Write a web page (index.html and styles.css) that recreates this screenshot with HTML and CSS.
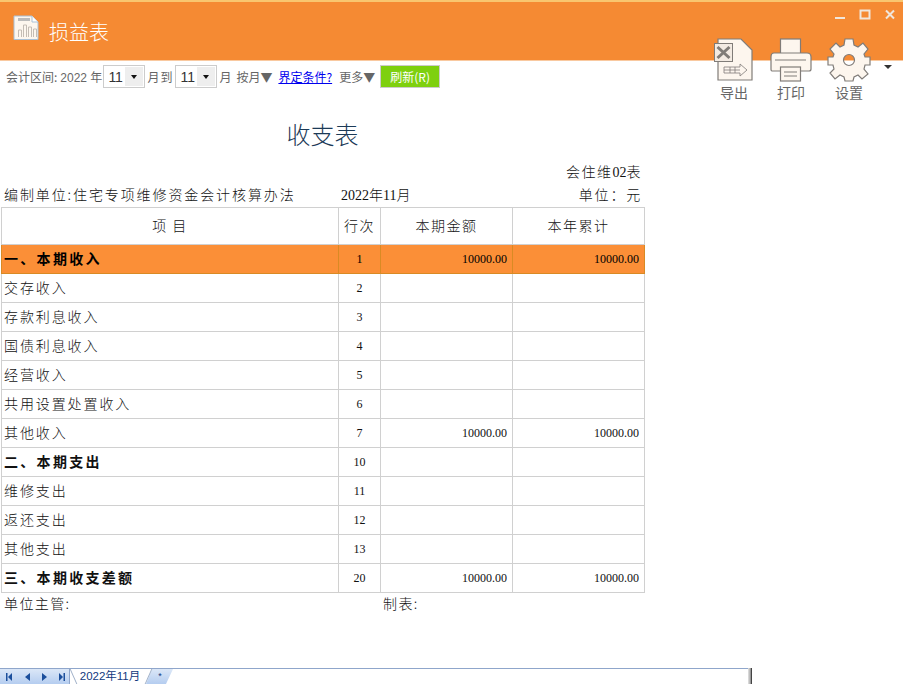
FILE: index.html
```html
<!DOCTYPE html>
<html lang="zh-CN">

<head>
    <meta charset="UTF-8">
    <title>损益表</title>
    <link rel="stylesheet" href="styles.css">
</head>

<body>
    <div id="cabecalho">
        <svg class="logo" width="26" height="26" viewBox="0 0 26 26">
            <path d="M1 1H19L25 7V24.500H1Z" fill="#fdf6ee" stroke="#a9c0d6" />
            <path d="M19 1V7H25" fill="#fff" stroke="#a9c0d6" />
            <rect x="5" y="3" width="12" height="3" fill="#bbb" />
            <path d="M5.500 22V15H8.500V22M10.500 22V10H13.500V22M15.500 22V12H18.500V22M20.500 22V14H23.500V22" fill="none" stroke="#c4bcb4" />
        </svg>
        <span class="titulo-janela">损益表</span>

        <div class="janela">
            <svg width="12" height="12" viewBox="0 0 12 12"><rect x="1" y="8" width="10" height="2" fill="#f0e6dc" /></svg>
            <svg width="12" height="12" viewBox="0 0 12 12"><rect x="1.500" y="1.500" width="9" height="8" fill="none" stroke="#f0e6dc" stroke-width="2" /></svg>
            <svg width="12" height="12" viewBox="0 0 12 12"><path d="M2 1.500L10 9.500M10 1.500L2 9.500" stroke="#f0e6dc" stroke-width="2" /></svg>
        </div>

        <div class="ferramentas">
            <div class="ferramenta">
                <svg width="40" height="44" viewBox="0 0 40 44">
                    <path d="M4 1H27L38 12V42H4Z" fill="#fdf6ee" stroke="#807c78" stroke-width="1.200" />
                    <rect x="0.500" y="5.500" width="18" height="18" fill="#f3ebe3" stroke="#807c78" />
                    <path d="M3.500 9L15.500 20M15.500 9L3.500 20" stroke="#807c78" stroke-width="3" />
                    <path d="M10 29H26V26L33 32L26 38V35H10ZM10 32H26M16 29V35M21 29V35" fill="none" stroke="#807c78" stroke-width="0.800" />
                </svg>
                <span>导出</span>
            </div>
            <div class="ferramenta">
                <svg width="42" height="44" viewBox="0 0 42 44">
                    <rect x="10.500" y="1" width="20" height="15" fill="#fdf6ee" stroke="#807c78" stroke-width="1.200" />
                    <path d="M4 15H37Q41 15 41 19V31Q41 33 39 33H2Q1 33 1 31V19Q1 15 4 15Z" fill="#fdf6ee" stroke="#807c78" stroke-width="1.200" />
                    <path d="M5 22H36" stroke="#807c78" />
                    <rect x="10.500" y="29" width="20" height="14" fill="#fdf6ee" stroke="#807c78" stroke-width="1.200" />
                    <path d="M14 34H27M14 38H27" stroke="#807c78" />
                </svg>
                <span>打印</span>
            </div>
            <div class="ferramenta engrenagem">
                <svg width="44" height="44" viewBox="0 0 44 44">
                    <path fill-rule="evenodd" d="M18 1H26L27 7L31 9L36 5L41 11L37 16L38 19L43 19V27L38 27L37 31L41 36L35 41L31 37L27 39L26 43H18L17 39L13 37L8 41L3 35L7 31L6 27L1 27V19L6 19L7 16L3 11L9 5L13 9L17 7ZM16.500 22a5.500 5.500 0 1 0 11 0a5.500 5.500 0 1 0 -11 0Z" fill="#fdf6ee" stroke="#807c78" stroke-width="1.200" />
                </svg>
                <span>设置</span>
            </div>
            <span class="seta-menu"></span>
        </div>
    </div>

    <div id="filtros">
        <span class="rotulo">会计区间:</span>
        <span class="rotulo ano">2022 年</span>
        <span class="seletor">11<i class="botao-seta"></i></span>
        <span class="rotulo grande">月到</span>
        <span class="seletor">11<i class="botao-seta"></i></span>
        <span class="rotulo grande">月</span>
        <span class="rotulo opcao">按月▼</span>
        <a href="#" class="link">界定条件?</a>
        <span class="rotulo opcao">更多▼</span>
        <button class="atualizar">刷新(R)</button>
    </div>

    <div id="relatorio">
        <h1>收支表</h1>
        <div class="codigo">会住维<b>02</b>表</div>
        <div class="info">
            <span class="unidade">编制单位:住宅专项维修资金会计核算办法</span>
            <span class="periodo"><b>2022</b>年<b>11</b>月</span>
            <span class="moeda">单位：元</span>
        </div>
        <table>
            <thead>
                <tr>
                    <th class="col-item">项 目</th>
                    <th class="col-linha">行次</th>
                    <th class="col-valor">本期金额</th>
                    <th class="col-valor">本年累计</th>
                </tr>
            </thead>
            <tbody>
                <tr class="destaque"><td class="forte">一、本期收入</td><td class="linha">1</td><td class="valor">10000.00</td><td class="valor">10000.00</td></tr>
                <tr><td>交存收入</td><td class="linha">2</td><td></td><td></td></tr>
                <tr><td>存款利息收入</td><td class="linha">3</td><td></td><td></td></tr>
                <tr><td>国债利息收入</td><td class="linha">4</td><td></td><td></td></tr>
                <tr><td>经营收入</td><td class="linha">5</td><td></td><td></td></tr>
                <tr><td>共用设置处置收入</td><td class="linha">6</td><td></td><td></td></tr>
                <tr><td>其他收入</td><td class="linha">7</td><td class="valor">10000.00</td><td class="valor">10000.00</td></tr>
                <tr><td class="forte">二、本期支出</td><td class="linha">10</td><td></td><td></td></tr>
                <tr><td>维修支出</td><td class="linha">11</td><td></td><td></td></tr>
                <tr><td>返还支出</td><td class="linha">12</td><td></td><td></td></tr>
                <tr><td>其他支出</td><td class="linha">13</td><td></td><td></td></tr>
                <tr><td class="forte">三、本期收支差额</td><td class="linha">20</td><td class="valor">10000.00</td><td class="valor">10000.00</td></tr>
            </tbody>
        </table>
        <div class="assinaturas">
            <span class="chefe">单位主管:</span>
            <span>制表:</span>
        </div>
    </div>

    <div id="abas">
        <div class="navegacao">
            <svg width="68" height="14" viewBox="0 0 68 14" fill="#1c4f9c">
                <path d="M6 3H7.500V11H6ZM12 3V11L8 7ZM30 3V11L25 7ZM42 3V11L47 7ZM59 3V11L63 7ZM63.500 3H65V11H63.500Z" />
            </svg>
        </div>
        <div class="aba ativa">2022年11月</div>
        <div class="aba nova">*</div>
        <div class="barra-fim"></div>
    </div>
</body>

</html>
```

FILE: styles.css
```css
html,
body {
    margin: 0;
    height: 684px;
    overflow: hidden;
}

body {
    font-family: "Liberation Serif", "Noto Sans CJK SC", serif;
    background-color: #fff;
    color: #111;
    display: flex;
    flex-direction: column;
    position: relative;
}

#cabecalho {
    height: 58px;
    flex: none;
    background-color: #f58a33;
    border-top: 2px solid #f9c66f;
    border-bottom: 1px solid #f9c9a0;
    display: flex;
    align-items: center;
    padding-left: 13px;
    gap: 10px;
    color: #fff;
}

.logo {
    margin-top: -6px;
}

.titulo-janela {
    font-family: "Noto Sans CJK SC", sans-serif;
    font-size: 20px;
    font-weight: 300;
}

.janela {
    position: absolute;
    top: 9px;
    right: 7px;
    display: flex;
    gap: 13px;
}

.ferramentas {
    position: absolute;
    top: 38px;
    left: 713px;
    display: flex;
    gap: 15px;
}

.ferramenta {
    display: flex;
    flex-direction: column;
    align-items: center;
    width: 42px;
    color: #666;
    font-family: "Noto Sans CJK SC", sans-serif;
    font-size: 14px;
    line-height: 20px;
}

.ferramenta svg {
    display: block;
    height: 44px;
    flex: none;
}

.engrenagem {
    margin-left: 1px;
}

.seta-menu {
    position: absolute;
    top: 27px;
    left: 171px;
    border-left: 4px solid transparent;
    border-right: 4px solid transparent;
    border-top: 4px solid #333;
}

#filtros {
    height: 31px;
    flex: none;
    display: flex;
    align-items: center;
    padding-left: 6px;
    font-family: "Noto Sans CJK SC", sans-serif;
    font-size: 12px;
    color: #666;
}

.rotulo {
    white-space: nowrap;
}

.ano {
    font-family: "Liberation Sans", "Noto Sans CJK SC", sans-serif;
    font-size: 12px;
    margin-left: 3px;
    margin-right: 1px;
}

.grande {
    margin: 0 2px;
    letter-spacing: 1px;
}

.opcao {
    margin-left: 2px;
}

.seletor {
    width: 36px;
    height: 21px;
    border: 1px solid #ccc;
    display: flex;
    align-items: center;
    justify-content: space-between;
    padding-left: 4px;
    font-family: "Liberation Sans", sans-serif;
    font-size: 14px;
    color: #333;
}

.botao-seta {
    width: 18px;
    height: 19px;
    margin-right: 1px;
    background-color: #eee;
    display: flex;
    align-items: center;
    justify-content: center;
}

.botao-seta::after {
    content: "";
    border-left: 3px solid transparent;
    border-right: 3px solid transparent;
    border-top: 4px solid #111;
}

.link {
    color: #00e;
    text-decoration: underline;
    margin-left: 6px;
    margin-right: 5px;
}

.atualizar {
    margin-left: 5px;
    width: 60px;
    height: 23px;
    padding: 0;
    background-color: #7ed00f;
    border: 1px solid #ccc;
    color: #fff;
    font-family: "Noto Sans CJK SC", sans-serif;
    font-size: 12px;
}

#relatorio {
    width: 644px;
    margin-left: 1px;
}

h1 {
    margin: 26px 0 0;
    padding-right: 1px;
    text-align: center;
    height: 31px;
    line-height: 31px;
    font-family: "Noto Sans CJK SC", sans-serif;
    font-size: 24px;
    font-weight: 300;
    color: #1c3a57;
    letter-spacing: 0;
}

.codigo {
    margin-top: 11px;
    height: 23px;
    line-height: 23px;
    padding-right: 3px;
    text-align: right;
    font-family: "Noto Sans CJK SC", sans-serif;
    font-size: 14px;
    font-weight: 300;
    letter-spacing: 1.500px;
}

.codigo b,
.periodo b {
    font-family: "Liberation Serif", serif;
    font-weight: normal;
    letter-spacing: 0;
}

.info {
    height: 24px;
    line-height: 23px;
    display: flex;
    font-family: "Noto Sans CJK SC", sans-serif;
    font-size: 14px;
    font-weight: 300;
}

.unidade {
    width: 337px;
    padding-left: 3px;
    letter-spacing: 1.900px;
    white-space: nowrap;
}

.periodo {
    flex: 1;
}

.moeda {
    padding-right: 3px;
    letter-spacing: 1.800px;
}

table {
    border-collapse: collapse;
    table-layout: fixed;
    width: 643px;
    font-family: "Noto Sans CJK SC", sans-serif;
    font-size: 14px;
    font-weight: 300;
}

th,
td {
    border: 1px solid #d0d0d0;
    padding: 0;
    overflow: hidden;
    white-space: nowrap;
}

th {
    height: 34px;
    padding-bottom: 2px;
    font-weight: 300;
    letter-spacing: 1.500px;
}

.col-item {
    width: 336px;
}

.col-linha {
    width: 41px;
}

.col-valor {
    width: 131px;
}

td {
    height: 26px;
    padding-bottom: 2px;
    padding-left: 2px;
    letter-spacing: 1.900px;
}

.forte {
    font-weight: 700;
    letter-spacing: 2.300px;
}

.linha {
    padding-left: 0;
    padding-bottom: 0;
    text-align: center;
    font-family: "Liberation Serif", serif;
    font-size: 12px;
    font-weight: normal;
    letter-spacing: 0;
}

.valor {
    padding: 0 5px 0 0;
    text-align: right;
    font-family: "Liberation Serif", serif;
    font-size: 12px;
    font-weight: normal;
    letter-spacing: 0;
}

.destaque td {
    background-color: #fb8f37;
    border-color: #d98a24;
    border-left-color: #d98a24;
    color: #000;
}

.assinaturas {
    display: flex;
    height: 21px;
    line-height: 21px;
    padding-left: 3px;
    font-family: "Noto Sans CJK SC", sans-serif;
    font-size: 14px;
    font-weight: 300;
    letter-spacing: 1.400px;
}

.chefe {
    width: 379px;
}

#abas {
    margin-top: auto;
    height: 16px;
    width: 752px;
    flex: none;
    display: flex;
    position: relative;
    border-top: 1px solid #8fa6cb;
    box-sizing: border-box;
    font-family: "Liberation Sans", "Noto Sans CJK SC", sans-serif;
    font-size: 11.500px;
    color: #123a80;
}

.navegacao {
    width: 69px;
    flex: none;
    background: linear-gradient(#dbe7f7, #b5cdf0);
    border-right: 1px solid #8fa6cb;
    display: flex;
    align-items: center;
}

.aba {
    line-height: 15px;
    text-align: center;
    flex: none;
}

.ativa {
    width: 72px;
    padding-left: 4px;
    position: relative;
    z-index: 1;
    background-color: #fff;
}

.ativa::before,
.ativa::after {
    content: "";
    position: absolute;
    top: 0;
    height: 15px;
    width: 1px;
    background-color: #a0b0c8;
}

.ativa::before {
    left: 3px;
    transform: skewX(24deg);
}

.ativa::after {
    right: -3px;
    transform: skewX(-24deg);
}

.nova {
    width: 27px;
    padding-left: 1px;
    box-sizing: border-box;
    font-size: 9px;
    background: linear-gradient(#dbe7f7, #b5cdf0);
    clip-path: polygon(6px 0, 100% 0, 20px 100%, 0 100%);
}

.barra-fim {
    position: absolute;
    top: -1px;
    right: 0;
    width: 4px;
    height: 16px;
    background: linear-gradient(90deg, #e4e4e4, #aaa 60%, #444 75%);
}
```
